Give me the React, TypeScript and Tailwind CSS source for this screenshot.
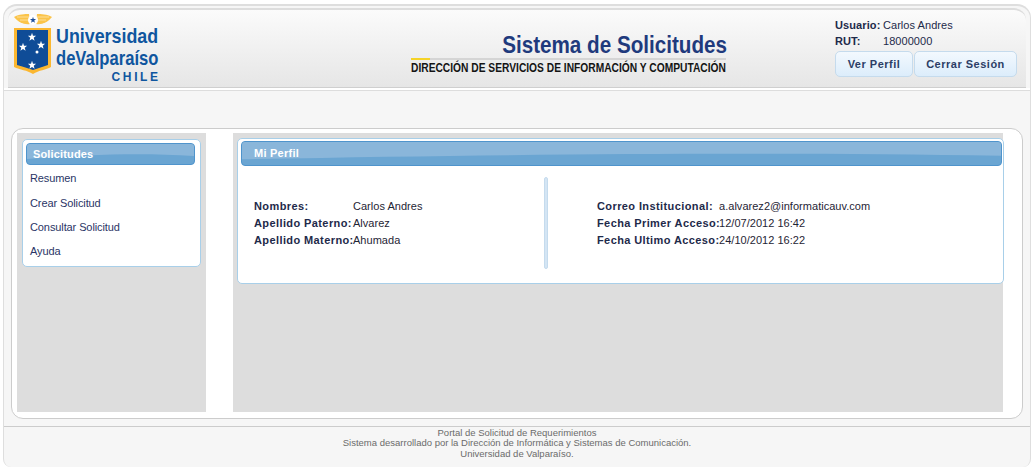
const font = "font-['Liberation_Sans',Arial,sans-serif]";

const STAR = "M0-4.200l1 2.900 3.100.1-2.400 1.900.9 3-2.600-1.700-2.600 1.700.9-3-2.400-1.900 3.100-.1z";

function Logo() {
  return (
    <svg width="40" height="75" viewBox="0 0 40 75" className="shrink-0">
      <path d="M1 17c5-3 11-3 15-3l1 10c-6 1-12-2-16-7z" fill="#fbc44a" />
      <path d="M39 17c-5-3-11-3-15-3l-1 10c6 1 12-2 16-7z" fill="#fbc44a" />
      <g stroke="#fff3cf" strokeWidth="0.6">
        <path d="M4 17h12M7 20h9M23 17h13M23 20h10" />
      </g>
      <circle cx="20" cy="20" r="5" fill="#fff" />
      <path transform="translate(20 20) scale(.75)" d={STAR} fill="#1d4f9c" />
      <path d="M1 28h37v39c-5 3-12 3-18 7-6-4-13-4-19-7z" fill="#fbb730" />
      <path d="M4 30h31v35c-5 2-10 3-15 5-5-2-10-3-16-5z" fill="#0f4c97" />
      <g fill="#fff">
        <path transform="translate(19 37)" d={STAR} />
        <path transform="translate(28 45)" d={STAR} />
        <path transform="translate(10 47)" d={STAR} />
        <path transform="translate(19 65)" d={STAR} />
        <circle cx="24" cy="52" r="1.500" />
      </g>
    </svg>
  );
}

function Header() {
  return (
    <div className="h-[80px] rounded-t-[12px] border-t-2 border-[#dddddd] bg-gradient-to-b from-[#fbfbfb] to-[#e6e6e6] flex border-b border-b-[#cfcfcf]">
      <div className="w-[400px] pl-[5px] flex items-start">
        <div className="-mt-[10px]"><Logo /></div>
        <div className="ml-[3px] mt-[15px] w-[102px] text-[#0f569f] font-bold">
          <div className="text-[21px] leading-[22px] origin-left scale-x-[.85] whitespace-nowrap">Universidad</div>
          <div className="text-[21px] leading-[22px] origin-left scale-x-[.79] whitespace-nowrap">deValparaíso</div>
          <div className="text-[12px] leading-[12px] mt-[2px] text-right tracking-[2.600px] -mr-[2.600px]">CHILE</div>
        </div>
      </div>
      <div className="w-[320px] pt-[23px] ml-[3px]">
        <div className="w-[316px] text-[24px] leading-[24px] font-bold text-[#1f3a7d] text-right whitespace-nowrap origin-right scale-x-[.86]">Sistema de Solicitudes</div>
        <div className="h-[2px] mt-[1px] bg-[#d5d5d5] w-[315px]"><div className="w-[19px] h-[2px] bg-[#f5d327]" /></div>
        <div className="text-[12px] leading-[14px] mt-[1px] font-bold text-[#141414] whitespace-nowrap origin-left scale-x-[.853] w-[360px]">DIRECCIÓN DE SERVICIOS DE INFORMACIÓN Y COMPUTACIÓN</div>
      </div>
      <div className="ml-[104px] pt-[7px] text-[11px] text-[#1e2a4a]">
        <div className="flex h-[16px] items-center"><span className="w-[48px] font-bold tracking-[0.1px]">Usuario:</span><span className="tracking-[0.05px]">Carlos Andres</span></div>
        <div className="flex h-[16px] items-center"><span className="w-[48px] font-bold tracking-[0.1px]">RUT:</span><span className="tracking-[0.05px]">18000000</span></div>
        <div className="flex gap-px mt-[2px]">
          <button className="w-[78px] h-[26px] rounded-[5px] border border-[#c5dbed] bg-gradient-to-b from-[#f3f9fe] to-[#dcedfb] font-bold text-[#2c3e66] tracking-[0.5px]">Ver Perfil</button>
          <button className="w-[103px] h-[26px] rounded-[5px] border border-[#c5dbed] bg-gradient-to-b from-[#f3f9fe] to-[#dcedfb] font-bold text-[#2c3e66] tracking-[0.5px]">Cerrar Sesión</button>
        </div>
      </div>
    </div>
  );
}

function BlueBar({ label, className }: { label: string; className: string }) {
  return (
    <div className={`relative overflow-hidden rounded-[4px] border border-[#4f94cc] bg-[#6aa5d2] text-white font-bold text-[11px] flex items-center ${className}`}>
      <svg className="absolute inset-0 w-full h-full" viewBox="0 0 100 20" preserveAspectRatio="none">
        <path d="M0 0h100v12C70 9 40 10 0 15z" fill="#8ab6da" />
      </svg>
      <span className="relative">{label}</span>
    </div>
  );
}

function Sidebar() {
  const items = ["Resumen", "Crear Solicitud", "Consultar Solicitud", "Ayuda"];
  return (
    <div className="w-[189px] bg-[#dddddd] pt-[6px] px-[5px]">
      <div className="w-[179px] h-[128px] bg-white rounded-[5px] border border-[#a8cfe9] px-[3px] pt-[3px]">
        <BlueBar label="Solicitudes" className="h-[22px] w-[169px] pl-[6px] tracking-[0.15px]" />
        <ul className="pl-[4px] pt-[1.600px] text-[11px] tracking-[-0.1px] text-[#2a3566]">
          {items.map((item) => (
            <li key={item} className="h-[24.200px] flex items-center">{item}</li>
          ))}
        </ul>
      </div>
    </div>
  );
}

function Row({ label, value, w }: { label: string; value: string; w: string }) {
  return (
    <div className="flex h-[17px] items-center whitespace-nowrap">
      <span className={`font-bold text-[#1e2a4a] tracking-[0.4px] ${w}`}>{label}</span>
      <span className="text-[#1f2535] tracking-[0.03px]">{value}</span>
    </div>
  );
}

function Profile() {
  return (
    <div className="w-[770px] bg-[#dddddd] pt-[5px] pl-[4px]">
      <div className="w-[767px] h-[146px] bg-white rounded-[5px] border border-[#a8cfe9] pl-[3px] pr-[1px] pt-[2px]">
        <BlueBar label="Mi Perfil" className="h-[25px] w-[761px] pl-[12px] tracking-[0.25px]" />
        <div className="flex text-[11px]">
          <div className="w-[303px] pl-[13px] pt-[32px]">
            <Row label="Nombres:" value="Carlos Andres" w="w-[99px]" />
            <Row label="Apellido Paterno:" value="Alvarez" w="w-[99px]" />
            <Row label="Apellido Materno:" value="Ahumada" w="w-[99px]" />
          </div>
          <div className="w-[4px] h-[92px] mt-[11px] rounded-full bg-[#d4e5f4] border border-[#c5dbed]" />
          <div className="pl-[49px] pt-[32px]">
            <Row label="Correo Institucional:" value="a.alvarez2@informaticauv.com" w="w-[122px]" />
            <Row label="Fecha Primer Acceso:" value="12/07/2012 16:42" w="w-[122px]" />
            <Row label="Fecha Ultimo Acceso:" value="24/10/2012 16:22" w="w-[122px]" />
          </div>
        </div>
      </div>
    </div>
  );
}

export default function App() {
  return (
    <div className={`h-[467px] w-[1034px] overflow-hidden bg-white ${font}`}>
      <div className="ml-[3px] mr-[3px] mt-[4px] h-[463px] rounded-t-[14px] rounded-b-[8px] border-x border-t-2 border-[#dedede] bg-[#f6f6f6] overflow-hidden">
        <div className="px-[4px] pt-[2px]">
          <Header />
        </div>
        <div className="h-[3px] bg-white border-b border-[#dddddd]" />
        <div className="pt-[37px] px-[7px]">
          <div className="w-[1012px] h-[291px] rounded-[12px] border border-[#cccccc] bg-white px-[5px] pt-[4px] flex gap-[27px]">
            <div className="h-[279px] flex"><Sidebar /></div>
            <div className="h-[279px] flex"><Profile /></div>
          </div>
        </div>
        <footer className="mt-[7px] border-t border-[#cccccc] pt-[0.600px] text-center text-[9.500px] leading-[10.500px] text-[#6b6b6b]">
          <p>Portal de Solicitud de Requerimientos</p>
          <p>Sistema desarrollado por la Dirección de Informática y Sistemas de Comunicación.</p>
          <p>Universidad de Valparaíso.</p>
        </footer>
      </div>
    </div>
  );
}
